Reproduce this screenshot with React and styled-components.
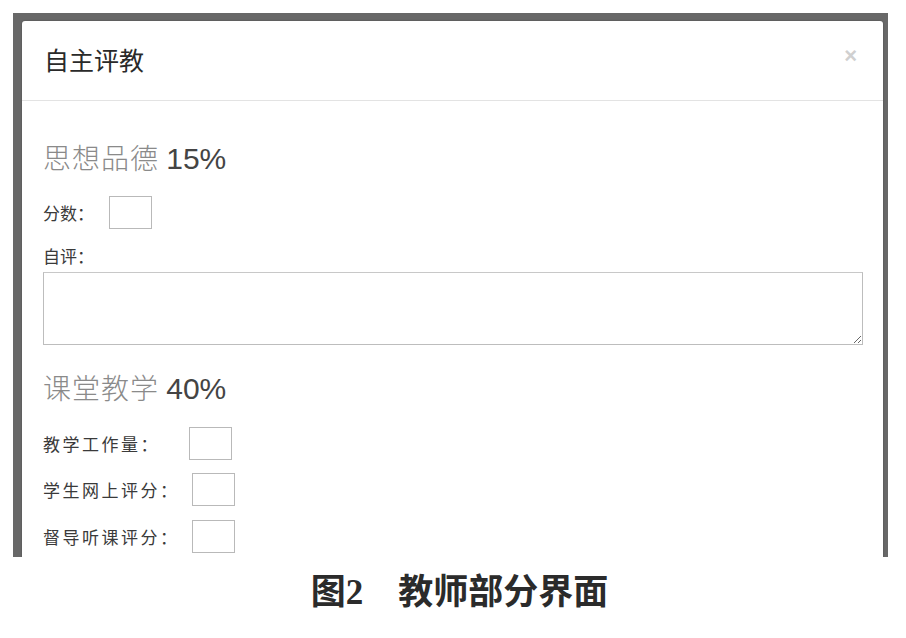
import styled, { createGlobalStyle } from "styled-components";

const GlobalStyle = createGlobalStyle`
	html, body {
		margin: 0;
		padding: 0;
		background: #ffffff;
	}
	body {
		font-family: "Noto Sans CJK SC", "Liberation Sans", sans-serif;
		color: #333;
	}
`;

const Page = styled.div`
	width: 906px;
	height: 638px;
	padding: 13px 0 0 13px;
	box-sizing: border-box;
	overflow: hidden;
`;

const Backdrop = styled.div`
	width: 875px;
	height: 544px;
	box-sizing: border-box;
	padding: 8px 5px 0 9px;
	background: #686868;
	overflow: hidden;
`;

const Modal = styled.div`
	height: 100%;
	background: #fff;
	border-radius: 3px 3px 0 0;
	box-shadow: 0 0 2px rgba(0, 0, 0, 0.3);
`;

const Header = styled.div`
	height: 80px;
	display: flex;
	align-items: center;
	justify-content: space-between;
	padding: 0 26px 0 22px;
	border-bottom: 1px solid #e3e3e3;
	box-sizing: border-box;
`;

const Title = styled.h4`
	margin: -3px 0 0;
	font-size: 25px;
	font-weight: 400;
	color: #2a2a2a;
	line-height: 30px;
`;

const Close = styled.span`
	font-family: "Liberation Sans", sans-serif;
	font-size: 22px;
	font-weight: 700;
	color: #d0d0d0;
	margin-top: -10px;
`;

const Body = styled.div`
	padding: 0 20px 0 21px;
`;

const SectionTitle = styled.h3`
	margin: ${(p) => p.$top}px 0 0;
	font-size: 28px;
	line-height: 32px;
	font-weight: 300;
	color: #8a8a8a;
	letter-spacing: 1px;

	& b {
		font-family: "Liberation Sans", sans-serif;
		font-size: 30px;
		font-weight: 400;
		color: #444;
		letter-spacing: 0;
	}
`;

const Row = styled.div`
	display: flex;
	align-items: center;
	margin-top: ${(p) => p.$top}px;
`;

const Label = styled.label`
	font-size: 17px;
	line-height: 20px;
	color: #3a3a3a;
	letter-spacing: ${(p) => p.$spacing || 0}px;
	width: ${(p) => (p.$width ? `${p.$width}px` : "auto")};
	flex-shrink: 0;
`;

const Box = styled.input`
	width: 43px;
	height: 33px;
	box-sizing: border-box;
	border: 1px solid #b9b9b9;
	background: #fff;
	margin: 0;
	padding: 0;
`;

const BlockLabel = styled(Label)`
	display: block;
	margin-top: ${(p) => p.$top}px;
`;

const TextArea = styled.textarea`
	display: block;
	width: 820px;
	height: 73px;
	box-sizing: border-box;
	margin: 6px 0 0 0;
	border: 1px solid #bdbdbd;
	border-top-color: #c8c8c8;
	background: #fff;
	resize: both;
`;

const Caption = styled.div`
	margin: 12px 0 0 0;
	text-align: center;
	font-size: 35px;
	line-height: 40px;
	font-weight: 700;
	color: #2b2b2b;

	& span {
		font-family: "Liberation Serif", serif;
	}
`;

const rows = [
	{ label: "教学工作量：", width: 146, top: 22 },
	{ label: "学生网上评分：", width: 149, top: 13 },
	{ label: "督导听课评分：", width: 149, top: 14 },
];

export default function App() {
	return (
		<>
			<GlobalStyle />
			<Page>
				<Backdrop>
					<Modal>
						<Header>
							<Title>自主评教</Title>
							<Close>×</Close>
						</Header>
						<Body>
							<SectionTitle $top={40}>
								思想品德 <b>15%</b>
							</SectionTitle>
							<Row $top={21}>
								<Label $width={66}>分数：</Label>
								<Box />
							</Row>
							<BlockLabel $top={17}>自评：</BlockLabel>
							<TextArea />
							<SectionTitle $top={26}>
								课堂教学 <b>40%</b>
							</SectionTitle>
							{rows.map((r) => (
								<Row key={r.label} $top={r.top}>
									<Label $width={r.width} $spacing={2.5}>
										{r.label}
									</Label>
									<Box />
								</Row>
							))}
						</Body>
					</Modal>
				</Backdrop>
				<Caption>
					图<span>2</span>　教师部分界面
				</Caption>
			</Page>
		</>
	);
}
